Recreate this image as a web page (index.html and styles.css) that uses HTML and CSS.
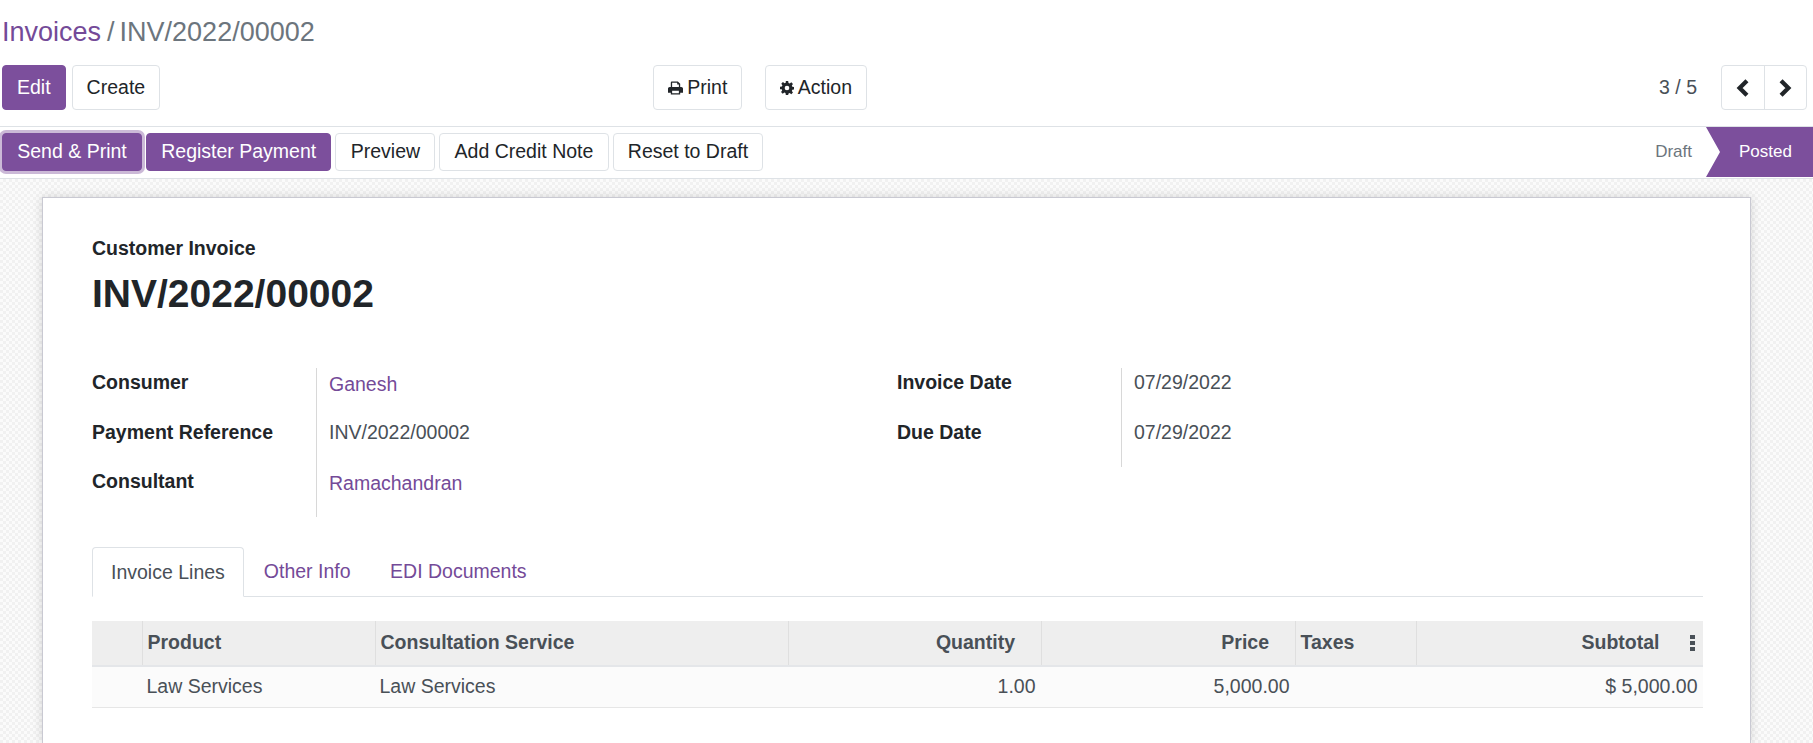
FILE: index.html
```html
<!DOCTYPE html>
<html lang="en">
<head>
<meta charset="utf-8">
<title>INV/2022/00002</title>
<link rel="stylesheet" href="styles.css">
</head>
<body>
<header class="panel">
  <h2 class="crumbs"><a class="link" href="#">Invoices</a><span class="crumb-sep">/</span><span class="crumb-current">INV/2022/00002</span></h2>
  <div class="panel-row">
    <div class="btn-row">
      <button class="btn primary">Edit</button>
      <button class="btn">Create</button>
    </div>
    <div class="actions">
      <button class="btn btn-print">
        <svg class="ico-print" viewBox="0 0 16 14"><path d="M3 6V1.2C3 .5 3.5 0 4.2 0h6.3L13 2.4V6h1.2c1 0 1.8.8 1.8 1.8V12h-3v2H3v-2H0V7.8C0 6.8.8 6 1.8 6H3zm1.4 0h7.2V3.3H9.8V1.4H4.4V6zm0 6.6h7.2V10H4.4v2.6z"/></svg>Print</button>
      <button class="btn">
        <svg class="ico-cog" viewBox="0 0 24 24"><path d="M10 0h4l.6 3.3 2 .8L19.4 2.2l2.8 2.8-1.9 2.8.8 2 3.3.6v4l-3.3.6-.8 2 1.9 2.8-2.8 2.8-2.8-1.9-2 .8L14 24h-4l-.6-3.3-2-.8-2.8 1.9-2.8-2.8 1.9-2.8-.8-2L0 14v-4l3.3-.6.8-2-1.9-2.8L5 1.8l2.8 1.9 2-.8L10 0zm2 8a4 4 0 1 0 0 8 4 4 0 0 0 0-8z" fill-rule="evenodd"/></svg>Action</button>
    </div>
    <div class="pager">
      <span class="pager-count">3 / 5</span>
      <div class="pager-btns">
        <button class="pager-btn"><svg class="chev" viewBox="0 0 12 16"><path d="M9.5 1.5 3 8l6.5 6.5"/></svg></button>
        <button class="pager-btn"><svg class="chev" viewBox="0 0 12 16"><path d="M2.5 1.5 9 8l-6.5 6.5"/></svg></button>
      </div>
    </div>
  </div>
</header>

<div class="statusbar">
  <div class="btn-row status-btns">
    <button class="btn small primary focused">Send &amp; Print</button>
    <button class="btn small primary">Register Payment</button>
    <button class="btn small">Preview</button>
    <button class="btn small">Add Credit Note</button>
    <button class="btn small">Reset to Draft</button>
  </div>
  <div class="states">
    <span class="state">Draft</span>
    <span class="state current">Posted</span>
  </div>
</div>

<main class="canvas">
  <section class="sheet">
    <div class="doc-type">Customer Invoice</div>
    <h1 class="doc-name">INV/2022/00002</h1>

    <div class="groups">
      <div class="group">
        <div class="label">Consumer</div>
        <div class="value"><a class="link raised" href="#">Ganesh</a></div>
        <div class="label">Payment Reference</div>
        <div class="value">INV/2022/00002</div>
        <div class="label">Consultant</div>
        <div class="value"><a class="link raised" href="#">Ramachandran</a></div>
      </div>
      <div class="group">
        <div class="label">Invoice Date</div>
        <div class="value">07/29/2022</div>
        <div class="label">Due Date</div>
        <div class="value">07/29/2022</div>
      </div>
    </div>

    <nav class="tabs">
      <a class="tab active" href="#">Invoice Lines</a>
      <a class="tab" href="#">Other Info</a>
      <a class="tab" href="#">EDI Documents</a>
    </nav>

    <table class="lines">
      <colgroup>
        <col class="c-handle"><col class="c-product"><col class="c-service"><col class="c-qty"><col class="c-price"><col class="c-tax"><col class="c-sub">
      </colgroup>
      <thead>
        <tr>
          <th></th>
          <th>Product</th>
          <th>Consultation Service</th>
          <th class="num">Quantity</th>
          <th class="num">Price</th>
          <th>Taxes</th>
          <th class="num last">Subtotal<svg class="kebab" viewBox="0 0 5 16"><rect y="0" width="5" height="4"/><rect y="6" width="5" height="4"/><rect y="12" width="5" height="4"/></svg></th>
        </tr>
      </thead>
      <tbody>
        <tr>
          <td></td>
          <td>Law Services</td>
          <td>Law Services</td>
          <td class="num">1.00</td>
          <td class="num">5,000.00</td>
          <td></td>
          <td class="num">$ 5,000.00</td>
        </tr>
      </tbody>
    </table>
  </section>
</main>
</body>
</html>
```
FILE: styles.css
```css
* { box-sizing: border-box; }
html, body { height: 100%; }
body {
  margin: 0;
  overflow: hidden;
  display: flex;
  flex-direction: column;
  background: #fff;
  color: #495057;
  font: 19.5px/1.5 "Liberation Sans", Arial, sans-serif;
}
.link { color: #744a98; text-decoration: none; }

.panel { padding: 0 6px 16px 2px; height: 126px; flex: none; }
.crumbs {
  margin: 0;
  height: 65px;
  padding-top: 12px;
  font-size: 27px;
  font-weight: 400;
  line-height: 40px;
  color: #6c757d;
}
.crumb-sep { margin: 0 5px 0 6px; }
.panel-row {
  display: grid;
  grid-template-columns: 651px 1fr auto;
  align-items: center;
}
.btn-row { display: flex; gap: 6px; }
.actions { display: flex; gap: 23px; }

.btn {
  height: 45px;
  padding: 0 14px;
  border: 1px solid #dee2e6;
  border-radius: 4px;
  background: #fff;
  color: #212529;
  font: inherit;
  white-space: nowrap;
}
.actions .btn { padding: 0 14.25px; }
.actions .btn-print { padding-right: 13.25px; }
.btn.primary { background: #7c4f9c; border-color: #7c4f9c; color: #fff; }
.btn.small { height: 38px; }
.btn.focused { box-shadow: 0 0 0 3px rgba(124, 79, 156, .4); }

.ico-print { width: 15px; height: 14px; margin-right: 4px; fill: #212529; vertical-align: -1px; }
.ico-cog { width: 14px; height: 14px; margin-right: 4px; fill: #212529; vertical-align: -1px; }

.pager { display: flex; align-items: center; gap: 24px; }
.pager-count { color: #495057; }
.pager-btns {
  display: flex;
  height: 45px;
  border: 1px solid #dee2e6;
  border-radius: 4px;
}
.pager-btn {
  width: 42px;
  padding: 0;
  border: 0;
  background: none;
}
.pager-btn + .pager-btn { width: 42px; padding-right: 2px; border-left: 1px solid #dee2e6; }
.chev {
  display: block;
  width: 14px;
  height: 18px;
  margin: auto;
  fill: none;
  stroke: #212529;
  stroke-width: 3.8;
}

.statusbar {
  display: flex;
  justify-content: space-between;
  flex: none;
  height: 53px;
  border-top: 1px solid #dee2e6;
  border-bottom: 1px solid #dee2e6;
}
.status-btns { gap: 4px; padding: 6px 0 0 2px; }
.status-btns .btn { padding: 0 14.25px; }
.states { display: flex; height: 50px; font-size: 17px; }
.state { line-height: 50px; color: #6c757d; margin-right: 14px; }
.state.current {
  width: 107px;
  margin: 0;
  padding-left: 33px;
  background: #7c4f9c;
  color: #fff;
  clip-path: polygon(0 0, 100% 0, 100% 100%, 0 100%, 14px 50%);
}

.canvas {
  flex: 1;
  min-height: 0;
  padding: 18px 62px 0 42px;
  overflow: hidden;
  background-color: #f9f9f9;
  background-image: repeating-conic-gradient(#f1f1f1 0 25%, #fbfbfb 0 50%);
  background-size: 6px 6px;
}
.sheet {
  height: 100%;
  padding: 32px 47px 0 49px;
  background: #fff;
  border: 1px solid #c9c9d2;
  border-bottom: 0;
  box-shadow: 0 0 10px rgba(0, 0, 0, .15);
}
.doc-type { font-weight: 700; color: #212529; line-height: 36px; }
.doc-name {
  margin: 0;
  height: 60px;
  font-size: 39px;
  line-height: 56px;
  font-weight: 700;
  color: #212529;
}

.groups {
  display: grid;
  grid-template-columns: 805px 1fr;
  margin-top: 42px;
  align-items: start;
}
.group {
  display: grid;
  grid-template-columns: 224px 1fr;
  grid-auto-rows: 49.6px;
}
.label { font-weight: 700; color: #212529; line-height: 28px; }
.value { border-left: 1px solid #d8d8d8; padding-left: 12px; line-height: 28px; }
.raised { position: relative; top: 2px; }

.tabs {
  display: flex;
  height: 50px;
  margin-top: 30px;
  border-bottom: 1px solid #dee2e6;
}
.tab {
  height: 50px;
  padding: 0 19.5px 0 20px;
  line-height: 48px;
  color: #744a98;
  text-decoration: none;
}
.tab.active {
  padding: 0 18px;
  color: #495057;
  background: #fff;
  border: 1px solid #dee2e6;
  border-bottom-color: #fff;
  border-radius: 4px 4px 0 0;
}

.lines {
  width: 1611px;
  margin-top: 24px;
  table-layout: fixed;
  border-collapse: collapse;
}
.c-handle { width: 50px; }
.c-product { width: 233px; }
.c-service { width: 413px; }
.c-qty { width: 253px; }
.c-price { width: 254px; }
.c-tax { width: 121px; }
.c-sub { width: 287px; }
.lines th {
  height: 45px;
  padding: 0 6px 1px 5px;
  background: #eee;
  border-left: 1px solid #dfdfdf;
  border-bottom: 2px solid #e4e6e9;
  text-align: left;
  font-weight: 700;
}
.lines th:first-child { border-left: 0; }
.lines th.num { text-align: right; padding-right: 25.5px; }
.lines th.last { padding-right: 43.5px; position: relative; }
.lines td {
  height: 42px;
  padding: 0 5.5px 1px 4.5px;
  background: #fbfbfb;
  border-bottom: 1px solid #e6e6e6;
}
.lines td.num { text-align: right; }
.kebab {
  position: absolute;
  right: 8px;
  top: 14px;
  width: 5px;
  height: 16px;
  fill: #495057;
}
```
